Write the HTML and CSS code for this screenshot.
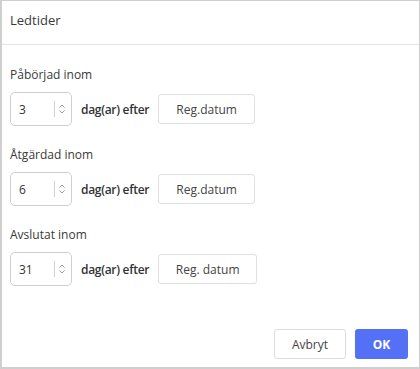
FILE: index.html
```html
<!doctype html>
<html>
<head>
  <title>Ledtider</title>
  <link rel="stylesheet" href="styles.css">
</head>
<body>

<div class="dialog">
  <div class="dialog-header">Ledtider</div>

  <div class="dialog-body">
    <div class="field">
      <div class="field-label">Påbörjad inom</div>
      <div class="field-row">
        <div class="num-input">
          <span class="num-value">3</span>
          <span class="num-sep"></span>
          <svg class="spin" width="8" height="12" viewBox="0 0 8 12"><path d="M1.5 4.5 L4 2 L6.5 4.5 M1.5 7.5 L4 10 L6.5 7.5" fill="none" stroke="#999" stroke-width="1"/></svg>
        </div>
        <span class="unit">dag(ar) efter</span>
        <button class="ref-btn">Reg.datum</button>
      </div>
    </div>

    <div class="field">
      <div class="field-label">Åtgärdad inom</div>
      <div class="field-row">
        <div class="num-input">
          <span class="num-value">6</span>
          <span class="num-sep"></span>
          <svg class="spin" width="8" height="12" viewBox="0 0 8 12"><path d="M1.5 4.5 L4 2 L6.5 4.5 M1.5 7.5 L4 10 L6.5 7.5" fill="none" stroke="#999" stroke-width="1"/></svg>
        </div>
        <span class="unit">dag(ar) efter</span>
        <button class="ref-btn">Reg.datum</button>
      </div>
    </div>

    <div class="field">
      <div class="field-label">Avslutat inom</div>
      <div class="field-row">
        <div class="num-input">
          <span class="num-value">31</span>
          <span class="num-sep"></span>
          <svg class="spin" width="8" height="12" viewBox="0 0 8 12"><path d="M1.5 4.5 L4 2 L6.5 4.5 M1.5 7.5 L4 10 L6.5 7.5" fill="none" stroke="#999" stroke-width="1"/></svg>
        </div>
        <span class="unit">dag(ar) efter</span>
        <button class="ref-btn wide">Reg. datum</button>
      </div>
    </div>
  </div>

  <div class="dialog-footer">
    <button class="btn btn-cancel">Avbryt</button>
    <button class="btn btn-ok">OK</button>
  </div>
</div>

</body>
</html>
```

FILE: styles.css
```css
body {
  margin: 0;
  background: #fff;
  font-family: 'Open Sans', sans-serif;
  color: #333;
}

.dialog {
  width: 420px;
  height: 369px;
  box-sizing: border-box;
  border: 1px solid #cfcfcf;
  border-left-width: 2px;
  border-bottom-width: 2px;
  display: flex;
  flex-direction: column;
}

.dialog-header {
  height: 44px;
  box-sizing: border-box;
  border-bottom: 1px solid #e3e3e3;
  padding: 10px 0 0 8px;
  font-size: 13px;
  line-height: 18px;
  color: #3a3a3a;
}

.dialog-body {
  flex: 1;
  padding: 21px 0 0 8px;
  display: flex;
  flex-direction: column;
  gap: 20px;
}

.field-label {
  font-size: 12px;
  line-height: 18px;
  color: #3a3a3a;
  margin-bottom: 8px;
}

.field-row {
  display: flex;
  align-items: center;
}

.num-input {
  width: 62px;
  height: 34px;
  box-sizing: border-box;
  border: 1px solid #cfcfcf;
  border-radius: 5px;
  display: flex;
  align-items: center;
  padding-left: 8px;
}

.num-value {
  flex: 1;
  font-size: 12px;
  color: #333;
}

.num-sep {
  width: 1px;
  height: 16px;
  background: #d0d0d0;
  margin-right: 3px;
}

.spin {
  margin-right: 5px;
}

.unit {
  font-size: 12px;
  font-weight: 600;
  letter-spacing: -0.3px;
  color: #333;
  margin-left: 9px;
}

.ref-btn {
  margin-left: 9px;
  width: 97px;
  height: 30px;
  box-sizing: border-box;
  border: 1px solid #e0e0e0;
  border-radius: 3px;
  background: #fff;
  font-family: 'Open Sans', sans-serif;
  font-size: 12px;
  color: #444;
  padding: 0;
}

.ref-btn.wide {
  width: 99px;
}

.dialog-footer {
  display: flex;
  justify-content: flex-end;
  gap: 9px;
  padding: 0 11px 8px 0;
}

.btn {
  height: 30px;
  box-sizing: border-box;
  border-radius: 3px;
  font-family: 'Open Sans', sans-serif;
  font-size: 12px;
  padding: 0;
}

.btn-cancel {
  width: 72px;
  border: 1px solid #dcdcdc;
  background: #fff;
  color: #444;
}

.btn-ok {
  width: 53px;
  border: none;
  background: #5470f5;
  color: #fff;
  font-weight: 700;
}
```
